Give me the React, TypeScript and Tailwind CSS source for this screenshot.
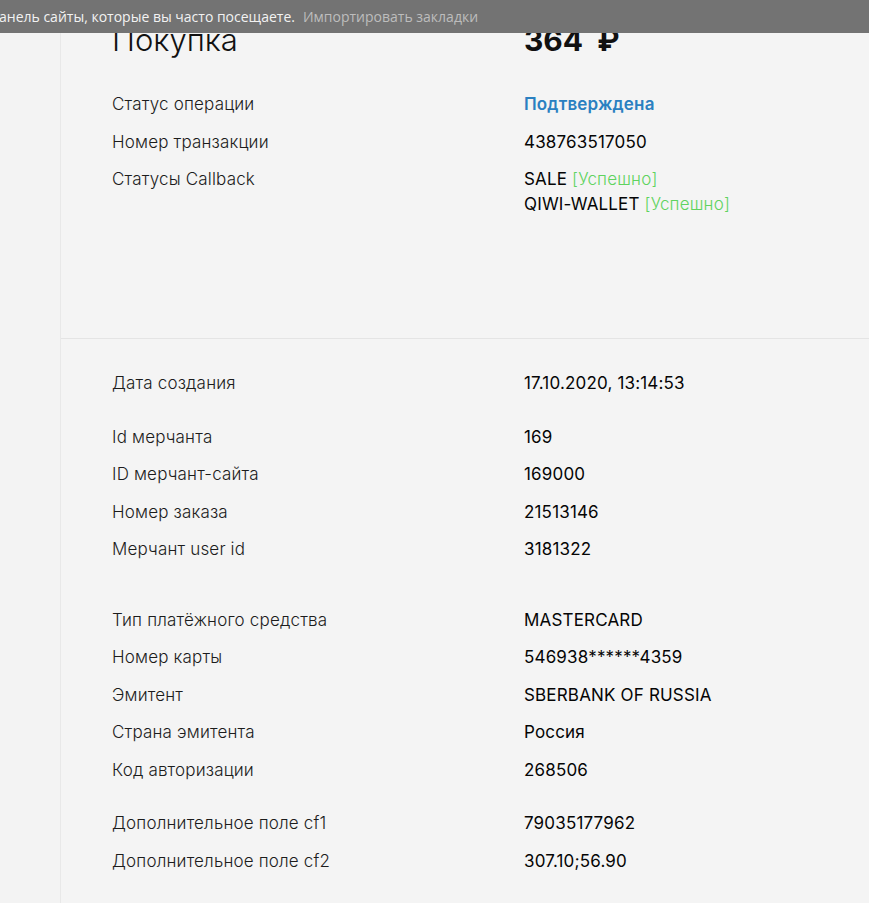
import React from "react";

type Row = {
  label: string;
  value: React.ReactNode;
};

const topRows: Row[] = [
  {
    label: "Статус операции",
    value: <span className="text-[#2a80c1] font-semibold">Подтверждена</span>,
  },
  { label: "Номер транзакции", value: "438763517050" },
  {
    label: "Статусы Callback",
    value: (
      <div>
        <div>
          SALE <span className="text-[#5fd35f] font-light">[Успешно]</span>
        </div>
        <div>
          QIWI-WALLET <span className="text-[#5fd35f] font-light">[Успешно]</span>
        </div>
      </div>
    ),
  },
];

const groups: { gap: string; rows: Row[] }[] = [
  { gap: "", rows: [{ label: "Дата создания", value: "17.10.2020, 13:14:53" }] },
  {
    gap: "mt-[16px]",
    rows: [
      { label: "Id мерчанта", value: "169" },
      { label: "ID мерчант-сайта", value: "169000" },
      { label: "Номер заказа", value: "21513146" },
      { label: "Мерчант user id", value: "3181322" },
    ],
  },
  {
    gap: "mt-[33px]",
    rows: [
      { label: "Тип платёжного средства", value: "MASTERCARD" },
      { label: "Номер карты", value: "546938******4359" },
      { label: "Эмитент", value: "SBERBANK OF RUSSIA" },
      { label: "Страна эмитента", value: "Россия" },
      { label: "Код авторизации", value: "268506" },
    ],
  },
  {
    gap: "mt-[16px]",
    rows: [
      { label: "Дополнительное поле cf1", value: "79035177962" },
      { label: "Дополнительное поле cf2", value: "307.10;56.90" },
    ],
  },
];

function InfoRow({ row }: { row: Row }) {
  return (
    <div className="grid grid-cols-[412px_1fr] items-start py-[6.25px] leading-[25px] text-[17px] tracking-[0.01em]">
      <div className="text-[#1c1c1c] font-light">{row.label}</div>
      <div className="text-[#050505] font-normal">{row.value}</div>
    </div>
  );
}

export default function App() {
  return (
    <div className="relative h-[903px] overflow-hidden bg-[#f4f4f4] font-['Inter',sans-serif]">
      {/* notification bar lies over the page */}
      <div className="absolute top-0 left-0 right-0 z-10 h-[33px] bg-[#737373] flex items-center font-['Open_Sans',sans-serif] text-[14px] whitespace-nowrap">
        <span className="text-[#f2f2f2] -ml-[1px]">анель сайты, которые вы часто посещаете.</span>
        <span className="text-[#bdbdbd] ml-[8px]">Импортировать закладки</span>
      </div>

      <div className="flex h-full">
        <div className="w-[61px] shrink-0 bg-[#f3f3f3] border-r border-[#e8e8e8]" />
        <div className="flex-1">
          <div className="h-[339px] border-b border-[#e4e4e4] pl-[51px] pt-[22px]">
            <div className="grid grid-cols-[412px_1fr] items-center h-[36px] leading-[36px]">
              <div className="text-[31px] font-light text-[#111]">Покупка</div>
              <div className="text-[30px] font-bold text-[#111]">364 &nbsp;₽</div>
            </div>
            <div className="mt-[28px]">
              {topRows.map((r) => (
                <InfoRow key={r.label} row={r} />
              ))}
            </div>
          </div>

          <div className="pl-[51px] pt-[26px]">
            {groups.map((g, i) => (
              <div key={i} className={g.gap}>
                {g.rows.map((r) => (
                  <InfoRow key={r.label} row={r} />
                ))}
              </div>
            ))}
          </div>
        </div>
      </div>
    </div>
  );
}
